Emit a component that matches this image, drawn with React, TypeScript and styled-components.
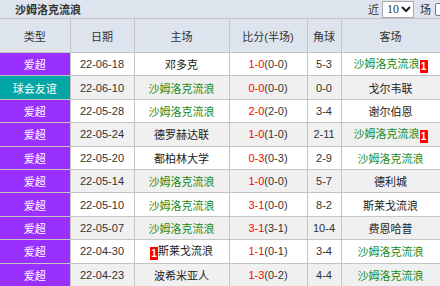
import React from "react";
import styled, { createGlobalStyle } from "styled-components";

const GlobalStyle = createGlobalStyle`
  body {
    margin: 0;
    background: #fff;
    font-family: "Liberation Sans", "Noto Sans CJK SC", sans-serif;
    font-size: 11px;
    color: #333;
    overflow: hidden;
  }
`;

const Page = styled.div`
  width: 440px;
  overflow: hidden;
`;

const TitleBar = styled.div`
  height: 18px;
  background: #dde4ee;
  border-bottom: 1px solid #c4c4c4;
  display: flex;
  align-items: center;
  justify-content: space-between;
`;

const Title = styled.span`
  padding-left: 15px;
  font-weight: bold;
  color: #333;
  font-size: 11px;
`;

const Controls = styled.div`
  display: flex;
  align-items: center;
  gap: 2px;
  margin-right: -8px;
  font-size: 11px;
  color: #333;
`;

const SelectBox = styled.span`
  width: 32px;
  height: 17px;
  box-sizing: border-box;
  margin: 0 4px 0 1px;
  background: #fff;
  border: 1px solid #a8a8a8;
  display: flex;
  align-items: center;
  justify-content: space-between;
  padding: 0 2px 0 4px;
  font-family: "Liberation Serif", serif;
  font-size: 12px;
`;

const Check = styled.span`
  width: 13px;
  height: 13px;
  box-sizing: border-box;
  border: 1px solid #777;
  border-radius: 2px;
  background: #fff;
  margin-left: 2px;
`;

const Table = styled.table`
  width: 440px;
  border-collapse: collapse;
  table-layout: fixed;
`;

const Head = styled.th`
  height: 33px;
  background: #dde4ee;
  font-weight: normal;
  color: #333;
  border: 1px solid #c4c4c4;
  border-top: none;
  padding: 0;
  &:first-child { border-left: none; }
`;

const Row = styled.tr<{ $alt: boolean }>`
  background: ${(p) => (p.$alt ? "#f0f0f0" : "#fff")};
`;

const Cell = styled.td`
  height: 22.4px;
  padding: 0;
  text-align: center;
  border: 1px solid #c4c4c4;
  color: #333;
  white-space: nowrap;
  &:first-child { border-left: none; }
`;

const TypeCell = styled(Cell)<{ $bg: string }>`
  background: ${(p) => p.$bg};
  color: #fff;
`;

const Team = styled.span<{ $mine: boolean }>`
  color: ${(p) => (p.$mine ? "#178a17" : "#222")};
`;

const Goal = styled.span`
  color: #f00;
`;

const Card = styled.span`
  display: inline-block;
  background: #f00;
  color: #fff;
  font-weight: bold;
  font-size: 10px;
  line-height: 13px;
  width: 8px;
  text-align: center;
  vertical-align: -2px;
`;

type Match = {
  type: string;
  date: string;
  home: string;
  score: string;
  half: string;
  corner: string;
  away: string;
  homeCard?: number;
  awayCard?: number;
};

const ME = "沙姆洛克流浪";

const matches: Match[] = [
  { type: "爱超", date: "22-06-18", home: "邓多克", score: "1-0", half: "(0-0)", corner: "5-3", away: ME, awayCard: 1 },
  { type: "球会友谊", date: "22-06-10", home: ME, score: "0-0", half: "(0-0)", corner: "0-0", away: "戈尔韦联" },
  { type: "爱超", date: "22-05-28", home: ME, score: "2-0", half: "(2-0)", corner: "3-4", away: "谢尔伯恩" },
  { type: "爱超", date: "22-05-24", home: "德罗赫达联", score: "1-0", half: "(1-0)", corner: "2-11", away: ME, awayCard: 1 },
  { type: "爱超", date: "22-05-20", home: "都柏林大学", score: "0-3", half: "(0-3)", corner: "2-9", away: ME },
  { type: "爱超", date: "22-05-14", home: ME, score: "1-0", half: "(0-0)", corner: "5-7", away: "德利城" },
  { type: "爱超", date: "22-05-10", home: ME, score: "3-1", half: "(0-0)", corner: "8-2", away: "斯莱戈流浪" },
  { type: "爱超", date: "22-05-07", home: ME, score: "3-1", half: "(3-1)", corner: "10-4", away: "费恩哈普" },
  { type: "爱超", date: "22-04-30", home: "斯莱戈流浪", score: "1-1", half: "(0-1)", corner: "3-4", away: ME, homeCard: 1 },
  { type: "爱超", date: "22-04-23", home: "波希米亚人", score: "1-3", half: "(0-2)", corner: "4-4", away: ME },
];

const typeColor = (t: string) => (t === "球会友谊" ? "#00a6a6" : "#9a30ff");

const App = () => {
  return (
    <Page>
      <GlobalStyle />
      <TitleBar>
        <Title>沙姆洛克流浪</Title>
        <Controls>
          近
          <SelectBox>
            10
            <svg width="10" height="8" viewBox="0 0 10 8">
              <path d="M1 2 L5 6 L9 2" stroke="#222" strokeWidth="2" fill="none" />
            </svg>
          </SelectBox>
          场
          <Check />
        </Controls>
      </TitleBar>
      <Table>
        <colgroup>
          <col style={{ width: 70 }} />
          <col style={{ width: 64 }} />
          <col style={{ width: 95 }} />
          <col style={{ width: 78 }} />
          <col style={{ width: 34 }} />
          <col style={{ width: 99 }} />
        </colgroup>
        <thead>
          <tr>
            <Head>类型</Head>
            <Head>日期</Head>
            <Head>主场</Head>
            <Head>比分(半场)</Head>
            <Head>角球</Head>
            <Head>客场</Head>
          </tr>
        </thead>
        <tbody>
          {matches.map((m, i) => (
            <Row key={m.date} $alt={i % 2 === 1}>
              <TypeCell $bg={typeColor(m.type)}>{m.type}</TypeCell>
              <Cell>{m.date}</Cell>
              <Cell>
                {m.homeCard ? <Card>{m.homeCard}</Card> : null}
                <Team $mine={m.home === ME}>{m.home}</Team>
              </Cell>
              <Cell>
                <Goal>{m.score}</Goal>
                {m.half}
              </Cell>
              <Cell>{m.corner}</Cell>
              <Cell>
                <Team $mine={m.away === ME}>{m.away}</Team>
                {m.awayCard ? <Card>{m.awayCard}</Card> : null}
              </Cell>
            </Row>
          ))}
        </tbody>
      </Table>
    </Page>
  );
};

export default App;
